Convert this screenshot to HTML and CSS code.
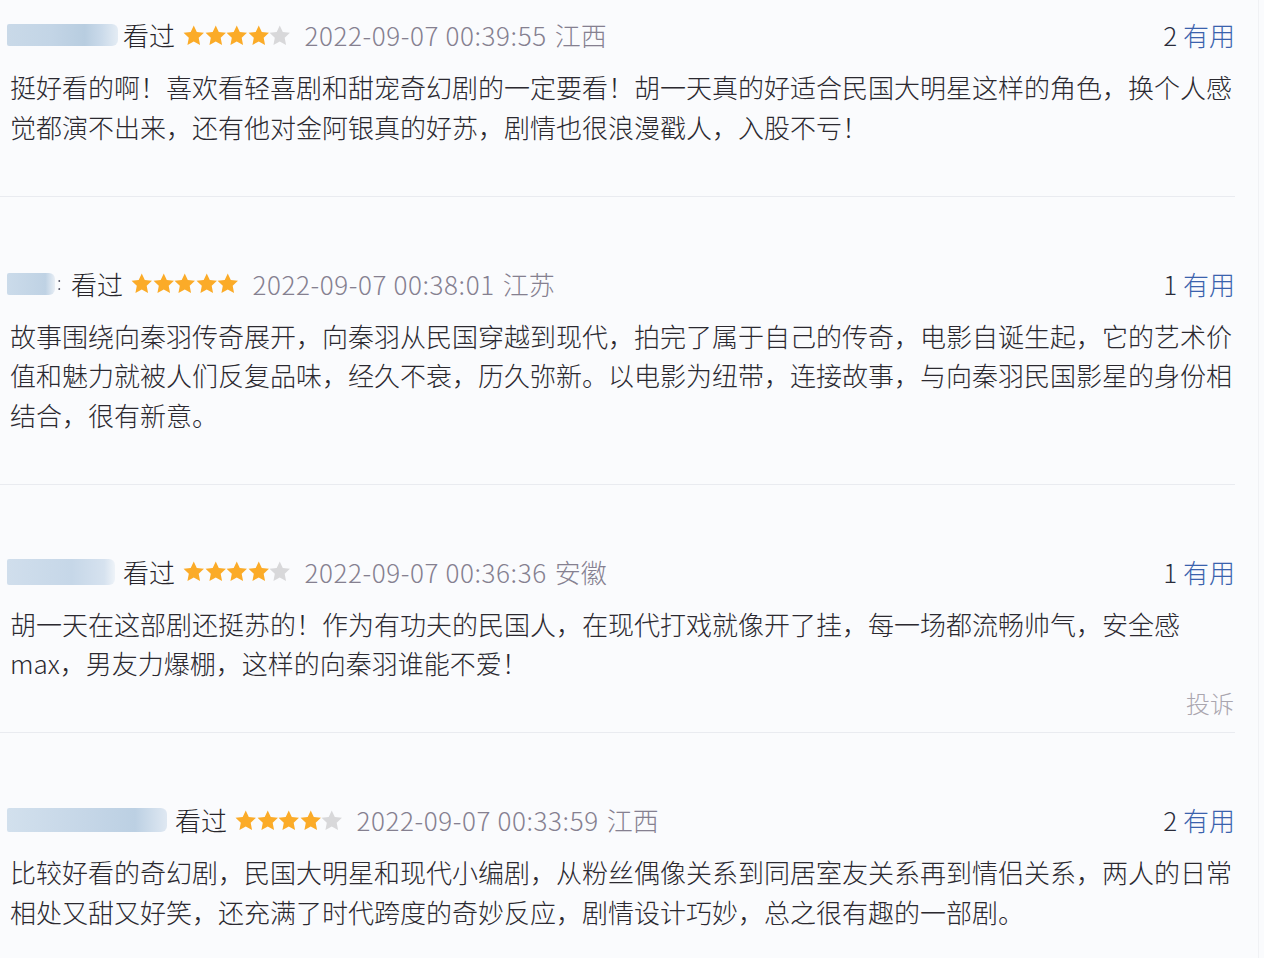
FILE: index.html
```html
<!DOCTYPE html>
<html lang="zh-CN">
<head>
<meta charset="utf-8">
<title>短评</title>
<link rel="stylesheet" href="styles.css">
</head>
<body>
<svg width="0" height="0" style="position:absolute">
  <defs>
    <symbol id="star" viewBox="0 0 24 23"><path d="M12 0.5L15.41 7.81L23.41 8.79L17.52 14.29L19.05 22.21L12 18.3L4.95 22.21L6.48 14.29L0.59 8.79L8.59 7.81Z"/></symbol>
  </defs>
</svg>
<div class="page">
  <div class="list">
    <div class="review first">
      <div class="head">
        <div class="meta">
          <span class="name name-1"></span>
          <span class="watched">看过</span>
          <span class="stars"><svg class="s on"><use href="#star"/></svg><svg class="s on"><use href="#star"/></svg><svg class="s on"><use href="#star"/></svg><svg class="s on"><use href="#star"/></svg><svg class="s off"><use href="#star"/></svg></span>
          <span class="time">2022-09-07 00:39:55</span>
          <span class="region">江西</span>
        </div>
        <div class="useful"><span class="num">2</span> <span class="lbl">有用</span></div>
      </div>
      <p class="text">挺好看的啊！喜欢看轻喜剧和甜宠奇幻剧的一定要看！胡一天真的好适合民国大明星这样的角色，换个人感觉都演不出来，还有他对金阿银真的好苏，剧情也很浪漫戳人，入股不亏！</p>
      <div class="foot"></div>
    </div>

    <div class="review">
      <div class="head">
        <div class="meta">
          <span class="name name-2"><i class="mark">:</i></span>
          <span class="watched">看过</span>
          <span class="stars"><svg class="s on"><use href="#star"/></svg><svg class="s on"><use href="#star"/></svg><svg class="s on"><use href="#star"/></svg><svg class="s on"><use href="#star"/></svg><svg class="s on"><use href="#star"/></svg></span>
          <span class="time">2022-09-07 00:38:01</span>
          <span class="region">江苏</span>
        </div>
        <div class="useful"><span class="num">1</span> <span class="lbl">有用</span></div>
      </div>
      <p class="text">故事围绕向秦羽传奇展开，向秦羽从民国穿越到现代，拍完了属于自己的传奇，电影自诞生起，它的艺术价值和魅力就被人们反复品味，经久不衰，历久弥新。以电影为纽带，连接故事，与向秦羽民国影星的身份相结合，很有新意。</p>
      <div class="foot"></div>
    </div>

    <div class="review">
      <div class="head">
        <div class="meta">
          <span class="name name-3"></span>
          <span class="watched">看过</span>
          <span class="stars"><svg class="s on"><use href="#star"/></svg><svg class="s on"><use href="#star"/></svg><svg class="s on"><use href="#star"/></svg><svg class="s on"><use href="#star"/></svg><svg class="s off"><use href="#star"/></svg></span>
          <span class="time">2022-09-07 00:36:36</span>
          <span class="region">安徽</span>
        </div>
        <div class="useful"><span class="num">1</span> <span class="lbl">有用</span></div>
      </div>
      <p class="text">胡一天在这部剧还挺苏的！作为有功夫的民国人，在现代打戏就像开了挂，每一场都流畅帅气，安全感max，男友力爆棚，这样的向秦羽谁能不爱！</p>
      <div class="foot"><span class="report">投诉</span></div>
    </div>

    <div class="review">
      <div class="head">
        <div class="meta">
          <span class="name name-4"></span>
          <span class="watched">看过</span>
          <span class="stars"><svg class="s on"><use href="#star"/></svg><svg class="s on"><use href="#star"/></svg><svg class="s on"><use href="#star"/></svg><svg class="s on"><use href="#star"/></svg><svg class="s off"><use href="#star"/></svg></span>
          <span class="time">2022-09-07 00:33:59</span>
          <span class="region">江西</span>
        </div>
        <div class="useful"><span class="num">2</span> <span class="lbl">有用</span></div>
      </div>
      <p class="text">比较好看的奇幻剧，民国大明星和现代小编剧，从粉丝偶像关系到同居室友关系再到情侣关系，两人的日常相处又甜又好笑，还充满了时代跨度的奇妙反应，剧情设计巧妙，总之很有趣的一部剧。</p>
      <div class="foot"></div>
    </div>
  </div>
</div>
</body>
</html>
```

FILE: styles.css
```css
html, body {
  margin: 0;
  padding: 0;
}
body {
  background: #fafbfd;
  font-family: "Noto Sans CJK SC", "Noto Sans", sans-serif;
  font-weight: 300;
  color: #2b2930;
  overflow: hidden;
}
.page {
  width: 1258px;
  height: 958px;
  background: #fafbfd;
  border-right: 1px solid #f0f1f4;
}
.list {
  width: 1235px;
}
.review {
  padding-top: 67px;
  border-bottom: 1px solid #e9ebf0;
}
.review.first {
  padding-top: 15px;
}
.head {
  height: 40px;
  display: flex;
  align-items: center;
  justify-content: space-between;
  padding-left: 7px;
}
.meta {
  display: flex;
  align-items: center;
  height: 40px;
}
.name {
  position: relative;
  display: block;
  height: 22px;
  border-radius: 2px 6px 6px 2px;
  background: linear-gradient(90deg, #c9d9e8 0%, #c3d5e6 40%, #b8cde0 70%, #cadaea 85%, #e4ecf4 100%);
  filter: blur(0.6px);
}
.name-1 { width: 111px; margin-right: 5px; }
.name-2 { width: 48px; margin-right: 16px; background: linear-gradient(90deg, #cbdbea, #bfd2e4 80%, #e8eef5); }
.name-3 { width: 108px; margin-right: 8px; height: 26px; background: linear-gradient(90deg, #d0deec, #c6d7e8 60%, #d6e2ef 90%, #eef3f8); }
.name-4 { width: 160px; margin-right: 8px; height: 24px; background: linear-gradient(90deg, #d2e0ed, #c5d6e7 50%, #bcd0e3 80%, #dfe8f2); }
.mark {
  position: absolute;
  left: 50px;
  top: -4px;
  font-style: normal;
  font-size: 18px;
  color: #556;
}
.watched {
  font-size: 26px;
  line-height: 40px;
  color: #27252b;
  margin-right: 8px;
}
.stars {
  display: flex;
  align-items: center;
  margin-right: 14px;
}
.s {
  width: 21.5px;
  height: 20.6px;
}
.s.on { fill: #fbab28; }
.s.off { fill: #d8d8da; }
.time, .region {
  font-size: 26px;
  line-height: 40px;
  color: #858090;
}
.time {
  letter-spacing: 0.6px;
  margin-right: 8px;
}
.useful {
  font-size: 26px;
  line-height: 40px;
  white-space: nowrap;
}
.useful .num { color: #2a2c3a; }
.useful .lbl { color: #3a62ad; }
.text {
  margin: 12px 0 0;
  padding-left: 10px;
  font-size: 26px;
  line-height: 39.5px;
  color: #2b2930;
}
.foot {
  height: 39.5px;
  margin-bottom: 10px;
  display: flex;
  justify-content: flex-end;
  align-items: center;
}
.report {
  font-size: 24px;
  color: #aaa6af;
  margin-right: 1px;
}
```
